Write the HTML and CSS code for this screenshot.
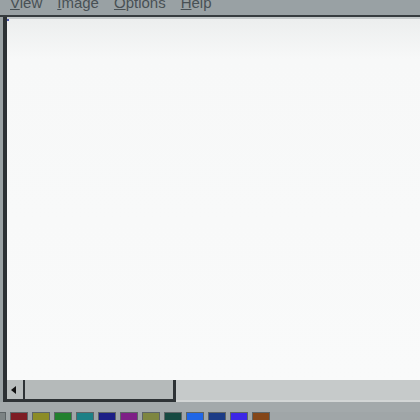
FILE: index.html
```html
<!DOCTYPE html>
<html>
<head>
<meta charset="utf-8">
<link rel="stylesheet" href="styles.css">
</head>
<body>
<div class="window">
  <div class="menubar">
    <span class="menu"><u>V</u>iew</span>
    <span class="menu"><u>I</u>mage</span>
    <span class="menu"><u>O</u>ptions</span>
    <span class="menu"><u>H</u>elp</span>
  </div>
  <div class="rule"></div>
  <div class="workspace">
    <div class="frame">
      <div class="canvas"><span class="corner"></span></div>
      <div class="scrollbar">
        <div class="arrow"><span class="tri"></span></div>
        <div class="thumb"></div>
        <div class="track"></div>
      </div>
    </div>
  </div>
  <div class="gapline"></div>
  <div class="palette">
    <span class="sw" style="background:#7c8384"></span>
    <span class="sw" style="background:#7d1c24"></span>
    <span class="sw" style="background:#8c8c26"></span>
    <span class="sw" style="background:#21802e"></span>
    <span class="sw" style="background:#1c8086"></span>
    <span class="sw" style="background:#1c1f86"></span>
    <span class="sw" style="background:#7e1f86"></span>
    <span class="sw" style="background:#7e8640"></span>
    <span class="sw" style="background:#164a42"></span>
    <span class="sw" style="background:#2066e6"></span>
    <span class="sw" style="background:#1c3c86"></span>
    <span class="sw" style="background:#3c26e6"></span>
    <span class="sw" style="background:#844618"></span>
  </div>
</div>
</body>
</html>
```
FILE: styles.css
```css
html, body {
  margin: 0;
  padding: 0;
  width: 420px;
  height: 420px;
  overflow: hidden;
  background: #a0a6a8;
}
.window {
  display: flex;
  flex-direction: column;
  width: 420px;
  height: 420px;
  overflow: hidden;
}
.window > * {
  flex-shrink: 0;
}
.menubar {
  height: 15px;
  background: #99a1a4;
  display: flex;
  padding-left: 10px;
  gap: 15px;
  overflow: hidden;
  font-family: "Liberation Sans", Arial, sans-serif;
  font-size: 15px;
  color: #485054;
}
.menu {
  line-height: 15px;
  margin-top: -5px;
}
.menu u {
  text-decoration-thickness: 1px;
}
.rule {
  height: 2px;
  background: #363c3f;
}
.workspace {
  display: flex;
  padding-left: 3px;
  background: #9aa2a4;
}
.frame {
  flex: 1;
  display: flex;
  flex-direction: column;
  border-left: 4px solid #2c3134;
  height: 385px;
}
.canvas {
  position: relative;
  flex: 1;
  background: linear-gradient(#eceeee, #f7f8f8 40px, #f9fafa);
  border-top: 2px solid #c4c9ca;
}
.corner {
  position: absolute;
  left: 0;
  top: 0;
  width: 2px;
  height: 2px;
  background: #4a56a8;
}
.scrollbar {
  height: 22px;
  display: flex;
}
.arrow {
  width: 16px;
  background: #b9bebe;
  border-right: 2px solid #2e3336;
  border-bottom: 3px solid #2e3336;
  display: flex;
  align-items: center;
  justify-content: center;
}
.tri {
  width: 0;
  height: 0;
  border-top: 4px solid transparent;
  border-bottom: 4px solid transparent;
  border-right: 5px solid #111;
  margin-right: 3px;
}
.thumb {
  width: 148px;
  background: #b5baba;
  border-right: 3px solid #2e3336;
  border-bottom: 3px solid #2e3336;
}
.track {
  flex: 1;
  background: #c6caca;
  border-bottom: 2px solid #d3d6d6;
}
.gapline {
  height: 10px;
  background: #a3a9ab;
}
.palette {
  display: flex;
  gap: 4px;
  padding-left: 10px;
  margin-left: -22px;
}
.sw {
  flex: none;
  width: 16px;
  height: 14px;
  border: 1px solid #5d6466;
}
```
